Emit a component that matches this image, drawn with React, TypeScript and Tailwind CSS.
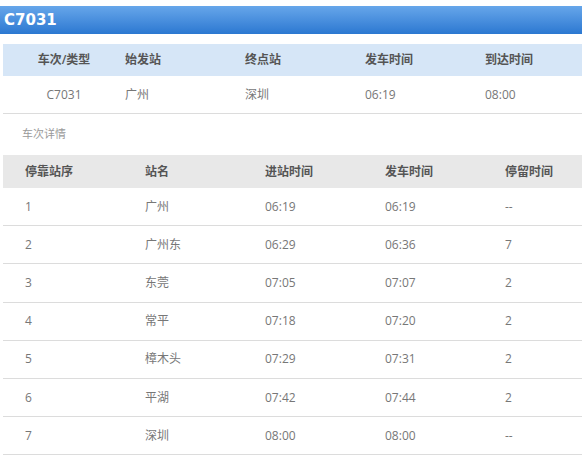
import React from "react";

const stops = [
  ["1", "广州", "06:19", "06:19", "--"],
  ["2", "广州东", "06:29", "06:36", "7"],
  ["3", "东莞", "07:05", "07:07", "2"],
  ["4", "常平", "07:18", "07:20", "2"],
  ["5", "樟木头", "07:29", "07:31", "2"],
  ["6", "平湖", "07:42", "07:44", "2"],
  ["7", "深圳", "08:00", "08:00", "--"],
];

const font = { fontFamily: '"Open Sans", "Noto Sans CJK SC", sans-serif' };

export default function App() {
  return (
    <div className="w-[582px] h-[462px] overflow-hidden bg-white" style={font}>
      <div className="pt-[6px]">
        <div className="h-[28px] flex items-center pl-[4px] bg-gradient-to-b from-[#66a6ea] to-[#2b78d1]">
          <span className="text-white font-bold text-[15px] leading-none" style={{ fontFamily: '"DejaVu Sans", Verdana, sans-serif' }}>
            C7031
          </span>
        </div>
      </div>

      <div className="w-[620px] pl-[3px] pt-[10px]">
        <div className="grid grid-cols-[122px_120px_120px_120px_120px] h-[32px] items-center bg-[#d6e6f7] text-[12px] font-semibold text-[#555]">
          <div className="text-center">车次/类型</div>
          <div>始发站</div>
          <div>终点站</div>
          <div>发车时间</div>
          <div>到达时间</div>
        </div>
        <div className="grid grid-cols-[122px_120px_120px_120px_120px] h-[38px] items-center border-b border-[#dcdcdc] text-[12px] text-[#777]">
          <div className="text-center">C7031</div>
          <div>广州</div>
          <div>深圳</div>
          <div>06:19</div>
          <div>08:00</div>
        </div>

        <div className="h-[41px] flex items-center pl-[19px] text-[11px] text-[#9a9a9a]">车次详情</div>

        <div className="grid grid-cols-[120px_120px_120px_120px_140px] h-[33px] items-center bg-[#e8e8e8] text-[12px] font-semibold text-[#555]">
          <div className="pl-[22px]">停靠站序</div>
          <div className="pl-[22px]">站名</div>
          <div className="pl-[22px]">进站时间</div>
          <div className="pl-[22px]">发车时间</div>
          <div className="pl-[22px]">停留时间</div>
        </div>
        {stops.map((r) => (
          <div
            key={r[0]}
            className="grid grid-cols-[120px_120px_120px_120px_140px] h-[38.2px] items-center border-b border-[#dcdcdc] text-[12px] text-[#777]"
          >
            {r.map((c, i) => (
              <div key={i} className="pl-[22px]">{c}</div>
            ))}
          </div>
        ))}
      </div>
    </div>
  );
}
